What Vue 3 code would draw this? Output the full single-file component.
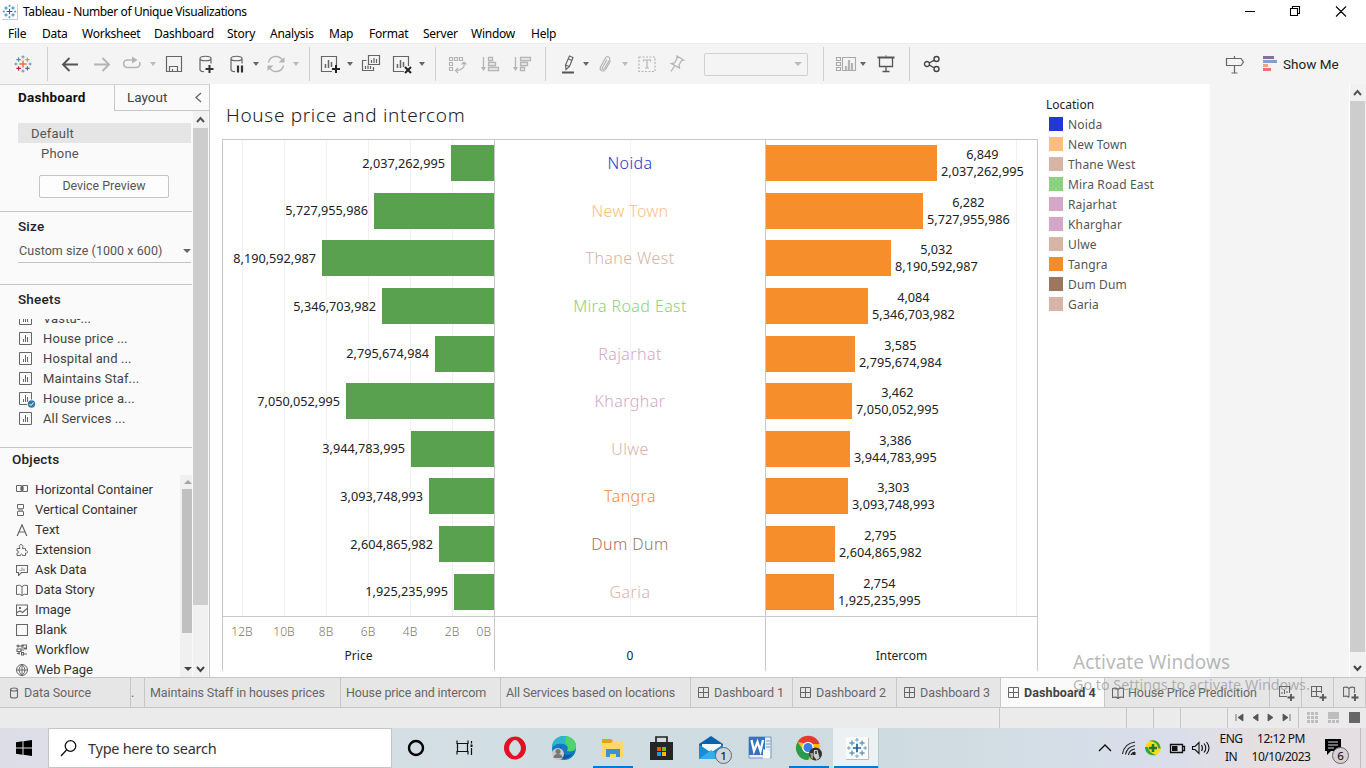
<script setup>
const plus = (x, y, r) => `M${x - r} ${y}h${2 * r}M${x} ${y - r}v${2 * r}`
const p = (d, c = '#666', w = 1.2, extra = '') => `<path d="${d}" fill="none" stroke="${c}" stroke-width="${w}" ${extra}/>`
const f = (d, c = '#666') => `<path d="${d}" fill="${c}"/>`

const cylinder = 'M6 6.5c0-3 11-3 11 0s-11 3-11 0v11q0 2 4 2.2M17 6.5v5'
const tableauMark = (a, b, c, d, e, g) =>
  p(plus(12, 12, 3.6), a, 1.5) +
  p(plus(7.6, 7.6, 2.2), b, 1.2) + p(plus(16.4, 7.6, 2.2), c, 1.2) +
  p(plus(7.6, 16.4, 2.2), d, 1.2) + p(plus(16.4, 16.4, 2.2), e, 1.2) +
  p(plus(12, 4.9, 1.5) + plus(12, 19.1, 1.5) + plus(4.9, 12, 1.5) + plus(19.1, 12, 1.5), g, 1.1)

const icons = {
  logo: tableauMark('#e8762c', '#5b879b', '#eb912c', '#c72037', '#5c6692', '#7199a6'),
  back: p('M20 12.5H5M11.5 6L5 12.5l6.5 6.5', '#555', 1.9),
  forward: p('M4 12.5h15M12.5 6l6.5 6.5-6.5 6.5', '#b4b4b4', 1.9),
  redo: p('M14 8H8a4 3.800 0 0 0 0 7.500h9.500a3.800 3.800 0 0 0 3-5.500', '#b4b4b4', 1.5) + f('M13 4.500l5.500 3.500-5.500 3.500z', '#b4b4b4'),
  save: p('M4.500 4.500h15v15h-15zM7.500 19.500v-5h8v5M10.500 19v-2', '#666', 1.2),
  addData: p(cylinder) + p('M15.500 13v8M11.500 17h8', '#333', 2),
  pauseData: p(cylinder) + p('M13 13.500v7M17 13.500v7', '#333', 2.2),
  refresh: p('M4.500 10.500a7.500 7.500 0 0 1 14-2M19.500 13.500a7.500 7.500 0 0 1-14 2', '#b4b4b4', 1.4) + f('M20.500 5v5.500h-6zM3.500 19v-5.500h6z', '#b4b4b4'),
  newSheet: p('M13 19.500H2.500v-15h15V14') + p('M6.500 12v4M9.500 8v8M12.500 10v5', '#666', 1.5) + p('M17 13v8M13 17h8', '#222', 2),
  duplicate: p('M9.500 3.500h11v9h-11zM7.500 8.500h-4v10h11V15') + p('M12.500 8v3M15 6v5M17.500 7v4M6.500 14v3M9 13.500v3.500M11.500 14v3', '#666', 1.2),
  clearSheet: p('M13 19.500H2.500v-15h15V14') + p('M6.500 12v4M9.500 8v8M12.500 10v5', '#666', 1.5) + p('M14 15l6 6M20 15l-6 6', '#222', 2),
  swap: p('M4.500 5.500h3v3h-3zM9.500 5.500h3v3h-3zM14.500 5.500h3v3h-3zM4.500 10.500h3v3h-3zM4.500 15.500h3v3h-3zM19 11c1 4-2 7.500-8 7.500M16.500 12.500l2.500-2.500 2.500 2.500M13 16l-2.500 2.500L13 21', '#b4b4b4'),
  sortAsc: p('M5.500 5v13M10.500 5.500h4v3h-4zM10.500 10.500h7v3h-7zM10.500 15.500h10v3h-10z', '#b4b4b4', 1.3) + f('M3 15h5l-2.500 4z', '#b4b4b4'),
  sortDesc: p('M5.500 5v13M10.500 5.500h10v3h-10zM10.500 10.500h7v3h-7zM10.500 15.500h4v3h-4z', '#b4b4b4', 1.3) + f('M3 15h5l-2.500 4z', '#b4b4b4'),
  highlight: p('M13.500 4l3.500 1.500-3.500 9-3.500 3-.5-4.500zM9.500 13l4 1.500M12.500 7l3.500 1.500', '#666', 1.2) + p('M6 20.500h12', '#555', 2),
  clip: p('M17.500 9l-5 8.500c-2 3-6.500 1-5-2.500l5-9c1.500-2.500 5.500-1 4 2l-5 8.500c-1 1.500-3 .5-2-1l4.500-8', '#b4b4b4', 1.2),
  textMark: p('M4 5h16v14.500H4z', '#b4b4b4', 1.2, 'stroke-dasharray="2 1.500"') + p('M8.500 9.500V8h7v1.500M12 8v8M10 16h4', '#b4b4b4', 1.2),
  pin: p('M12 4l6.500 4-2 .5-2.500 4.500.5 3-8-4.500 3-.5 2.500-4.500zM9.500 14L6 19.500', '#b4b4b4', 1.3),
  cards: p('M2.500 5.500h4v3h-4zM2.500 10.500h4v3h-4zM2.500 15.500h4v3h-4zM8.500 5.500h13v13h-13z', '#a9a9a9', 1.1) + p('M12 14v4M15 8v10M18 11v7', '#b4b4b4', 2.2),
  present: p('M5.500 5.500v9h13v-9M12 3.500v1M12 14.500v5M8.500 19.500h7', '#555', 1.3) + p('M3.500 5.500h17', '#555', 2),
  share: p('M9.500 12a2.500 2.500 0 1 1-5 0a2.500 2.500 0 1 1 5 0M19 7a2.500 2.500 0 1 1-5 0a2.500 2.500 0 1 1 5 0M19 17a2.500 2.500 0 1 1-5 0a2.500 2.500 0 1 1 5 0M9.300 11l5-3M9.300 13l5 3', '#444', 1.4),
  guide: p('M4.500 6.500h14.500l2.500 3.500-2.500 3.500H4.500zM12.500 4v2.500M12.500 13.500v7.500M9.500 21h6', '#666', 1.2),
}

const toolbar = ['logo', '|', 'back', 'forward', 'redo', 'vl', 'save', 'addData', 'pauseData', 'v', 'refresh', 'vl', '|',
  'newSheet', 'v', 'duplicate', 'clearSheet', 'v', '|', 'swap', 'sortAsc', 'sortDesc', '|', 'highlight', 'v', 'clip', 'vl',
  'textMark', 'pin', 'select', '|', 'cards', 'v', 'present', '|', 'share', 'guide']

const menus = ['File', 'Data', 'Worksheet', 'Dashboard', 'Story', 'Analysis', 'Map', 'Format', 'Server', 'Window', 'Help']
const sheets = ['Vastu-...', 'House price ...', 'Hospital and ...', 'Maintains Staf...', 'House price a...', 'All Services ...']

const objects = [
  ['Horizontal Container', p('M.500 1.500h5v6h-5zM6.500 1.500h5v6h-5z', '#666', 1) + f('M4 2.500h1v4H4zM7 2.500h1v4H7z', '#999')],
  ['Vertical Container', p('M1.500.500h6v4h-6zM1.500 7.500h6v4h-6z', '#666', 1) + f('M2 4.500h5v3H2z', '#aaa')],
  ['Text', p('M1.200 12L6 .800l4.800 11.200M3 8h6', '#666', 1.2)],
  ['Extension', p('M1 4.500h3C2.500 1.500 3.500.600 5 .600s2.500 1 1.500 4h3v2c3-.5 3 3 0 2.500V11.500H6.500c0-2-2-2-2 0H1V9c2.500 0 2.500-2 0-2z', '#666', 1)],
  ['Ask Data', p('M.500 1.500h11v7h-6l-3 3v-3h-2z', '#666', 1.1) + p('M4 5.500V7M6 3.500V7M8 4.500V7', '#aaa', 1.5)],
  ['Data Story', p('M6 2.500Q4 .5.500 1.500v9Q4 9.500 6 11.500Q8 9.500 11.500 10.500v-9Q8 .5 6 2.500v9', '#666', 1)],
  ['Image', p('M.500 1h11v10.500H.500zM1 8.500l3-1.500 2.500 1.500L11 4.500', '#666', 1.1) + f('M3 3h2v2H3z')],
  ['Blank', p('M.500.500h11v11H.500z', '#666', 1.1)],
  ['Workflow', p('M3 2a1 1 0 1 1-2 0a1 1 0 1 1 2 0M3 2h5M6 1h4.500v3H6zM1 5h4v2.500H1zM5 6h3M8 5h3M3 7.500v3M1 9.500h3M5.500 8.500h2v2.500h-2zM8 10h3', '#666', 1.1)],
  ['Web Page', p('M11.500 6A5.500 5.500 0 1 1 .500 6A5.500 5.500 0 1 1 11.500 6M.500 6h11M6 .500v11M6 .500Q0 6 6 11.500Q12 6 6 .500', '#666', 1)],
]

const rows = [
  ['Noida', 2037262995, 6849, '#2337d6'],
  ['New Town', 5727955986, 6282, '#ffbe7d'],
  ['Thane West', 8190592987, 5032, '#d7b5a6'],
  ['Mira Road East', 5346703982, 4084, '#8cd17d'],
  ['Rajarhat', 2795674984, 3585, '#d4a6c8'],
  ['Kharghar', 7050052995, 3462, '#d4a6c8'],
  ['Ulwe', 3944783995, 3386, '#d7b5a6'],
  ['Tangra', 3093748993, 3303, '#f28e2b'],
  ['Dum Dum', 2604865982, 2795, '#9d7660'],
  ['Garia', 1925235995, 2754, '#d7b5a6'],
].map(([name, price, count, color]) => ({ name, price, count, color }))
const fmt = n => n.toLocaleString('en-US')
const ticks = ['12B', '10B', '8B', '6B', '4B', '2B', '0B']

const grid4 = p('M.500.500h10v10H.500zM5.500.500v10M.500 5.500h10', '#666', 1)
const book = p('M6 2.500Q4 .5.500 1.500v9Q4 9.500 6 11.500Q8 9.500 11.500 10.500v-9Q8 .5 6 2.500v9', '#666', 1.1)
const addBadge = p('M12 8v7M8.500 11.500h7', '#555', 1.8)
const tabs = [
  { t: 'Data Source', i: p('M.500 2.500c0-2 7-2 7 0s-7 2-7 0v7c0 2 7 2 7 0v-7', '#666', 1.1), k: 'source' },
  { t: '.', k: 'cut' },
  { t: 'Maintains Staff in houses prices' },
  { t: 'House price and intercom' },
  { t: 'All Services based on locations' },
  { t: 'Dashboard 1', i: grid4 }, { t: 'Dashboard 2', i: grid4 }, { t: 'Dashboard 3', i: grid4 },
  { t: 'Dashboard 4', i: grid4, k: 'active' },
  { t: 'House Price Predicition', i: book },
  { i: p('M8 10.500H.500v-10h10V7M3 6v2M5.500 4v4M8 5v2', '#666', 1.1) + addBadge, k: 'add' },
  { i: p('M8 10.500H.500v-10h10V7M5.500.500v10M.500 5.500h10', '#666', 1.1) + addBadge, k: 'add' },
  { i: p('M6 2.500Q4 .5.500 1.500v9Q4 9.500 6 11.500M6 11V2.500Q8 .5 11.500 1.500V7', '#666', 1.1) + addBadge, k: 'add' },
]

const apps = [
  { n: 'cortana', s: p('M22 16a7 7 0 1 1-14 0a7 7 0 1 1 14 0', '#000', 2.4) },
  { n: 'tasks', s: p('M7 8.500v3h11v-3M7 22.500v-3h11v3M7.500 11.500v8M17.500 11.500v8M21.500 9v2.500M21.500 16v7', '#111', 1.2) + f('M20.500 12.500h2v2.500h-2z', '#111') },
  { n: 'opera', s: '<ellipse cx="16" cy="16" rx="8.500" ry="9" fill="none" stroke="#e30f22" stroke-width="5"/><ellipse cx="16" cy="16" rx="4.800" ry="8" fill="#d0dde2"/>' },
  { n: 'edge', s: '<circle cx="16" cy="16" r="12" fill="#1479c4"/><path d="M4 14C6 1 25 1 28 13c.5 6-5 7-9 6 2-3 0-6-4-7-4-.8-9 0-11 4z" fill="#2eb7cc"/><path d="M18 4c7 1 10 6 10 10 0 5-5 6-9 5 2-3 1-6-2-8z" fill="#4fd36b"/><path d="M17 12c-5 1-5 6-2 9 4 4 8 2 10 0-3 5-8 7-13 5-3-4-2-12 5-14z" fill="#0c559f"/><circle cx="10" cy="22" r="6" fill="#c9c9c9"/><circle cx="10" cy="19.500" r="2.500" fill="#777"/><path d="M5.500 26q0-4 4.500-4t4.500 4z" fill="#777"/>' },
  { n: 'explorer', u: 1, s: '<path d="M5 7h9l2 2h10v5H5z" fill="#e3a21a"/><path d="M5 11l9 0 2-2h10v16H5z" fill="#ffd866"/><path d="M9 25V17h14v8h-4v-3h-6v3z" fill="#3a91d5"/>' },
  { n: 'store', s: '<path d="M10 10V5h11v5" fill="none" stroke="#222" stroke-width="1.700"/><path d="M4 10h23v18H4z" fill="#252525"/><path d="M11 15h4v4h-4z" fill="#f25022"/><path d="M16 15h4v4h-4z" fill="#7fba00"/><path d="M11 20h4v4h-4z" fill="#00a4ef"/><path d="M16 20h4v4h-4z" fill="#ffb900"/>' },
  { n: 'mail', b: '1', s: '<path d="M4 12L16 4l12 8v15H4z" fill="#0862af"/><path d="M7 12h19v9H7z" fill="#f4f8fb"/><path d="M4 12.500l12 8 12-8V27H4z" fill="#138ddb"/><path d="M4 27l12-9 12 9z" fill="#35aced"/>' },
  { n: 'word', s: '<path d="M5 5h22v21H5z" fill="#e9f0f8" stroke="#7297c2"/><path d="M5 5h16v18H5z" fill="#3a71bd"/><path d="M7.500 8l2.500 11L13.500 10l3 9 2.500-11" fill="none" stroke="#fff" stroke-width="2.300"/><path d="M22 9h4M22 12h4M22 15h4" stroke="#7b9ac4"/><path d="M19 17l7 2.500v7h-7z" fill="#fff"/>' },
  { n: 'chrome', u: 1, s: '<circle cx="15" cy="16" r="12" fill="#fbbf12"/><path d="M4.600 10A12 12 0 0 1 26.500 12H15z" fill="#e53a2e"/><path d="M4.600 10A12 12 0 0 0 15 28l4-8-8-1z" fill="#279c51"/><circle cx="15" cy="15.500" r="5.800" fill="#fff"/><circle cx="15" cy="15.500" r="4.500" fill="#3b7de9"/><circle cx="22.500" cy="22" r="6.500" fill="#333"/><path d="M21 18h3.500l2 8-3 2-3-4z" fill="#ccc"/><path d="M17 21h3v6l-2-1z" fill="#999"/><path d="M22 19h2v3h-2z" fill="#555"/>' },
  { n: 'tableau', u: 1, s: '<path d="M6 5h22v22H6z" fill="#fbfbfb"/><path d="M6 27.500h22.500V6" fill="none" stroke="#bbb"/><g transform="translate(3.200 2.200) scale(1.150)">' + tableauMark('#1f639a', '#6c9ab8', '#6c9ab8', '#6c9ab8', '#6c9ab8', '#86adc6') + '</g>' },
]

const tray = [
  p('M6 15l6-6 6 6', '#111', 1.4),
  p('M5.500 18C6.500 11 11 7 18 6M8.500 18.500C9.500 13 12 10.500 18 9.500M11.500 19c.5-3.500 3-5.500 6.500-6M14 19c.5-1.500 2-2.500 4-3', '#222', 1.2) + f('M15.500 16h3v3h-3z', '#222'),
  '<circle cx="12" cy="12" r="7.700" fill="#ffd91c"/><path d="M8 5c7-3 12 3 11.500 8l-2.500-1C17 8 13 5 8 5M4 11c0 6 5 9 11 8-3-1-7-3-8-8z" fill="#38a148"/><path d="M12 8v8M8 12h8" stroke="#187a32" stroke-width="2.600"/>',
  p('M5.500 8.500h12v8h-12zM17.500 10.500h2v4h-2', '#111', 1.3) + f('M7 10h5.500v5H7z', '#111'),
  p('M3.500 10.500h2.500l4-4v11l-4-4H3.500zM12.500 9q2 3 0 6M15 7.500q3.500 4.500 0 9M17.500 6q5 6 0 12', '#111', 1.1),
]
const pager = ['M1 1v7M8 1v7L3 4.500z', 'M7 1v7L2 4.500z', 'M2 1v7l5-3.500z', 'M1 1v7l5-3.500zM8 1v7']
</script>

<template>
  <div class="app">
    <header class="titlebar">
      <svg class="mark" viewBox="2.500 2.500 19 19" v-html="tableauMark('#1f639a', '#2f88b5', '#2f88b5', '#2f88b5', '#2f88b5', '#4e9cc0')"></svg>
      <span class="caption">Tableau - Number of Unique Visualizations</span>
      <svg class="win" width="116" height="20">
        <path d="M1 10.500h10M46.500 7.500h7v7h-7zM48.500 7.500v-2h7v7h-2M92 5.500l10 10M102 5.500l-10 10" fill="none" stroke="#000" stroke-width="1.100" />
      </svg>
    </header>
    <nav class="menubar"><span v-for="m in menus" :key="m">{{ m }}</span></nav>

    <div class="toolbar">
      <span v-for="(t, i) in toolbar" :key="i" class="tool">
        <i v-if="t === '|'" class="sep"></i>
        <i v-else-if="t[0] === 'v'" class="caret" :class="{ light: t === 'vl' }"></i>
        <span v-else-if="t === 'select'" class="select"><i class="caret light"></i></span>
        <svg v-else width="24" height="24" v-html="icons[t]"></svg>
      </span>
      <span class="tool showme">
        <svg width="15" height="16"><path d="M0 0h11v3H0z" fill="#86709a" /><path d="M0 4h14v3H0z" fill="#7ba3cd" /><path d="M0 8h5v3H0z" fill="#f2a57e" /><path d="M0 12h8v3H0z" fill="#f36d7a" /></svg>
        <b>Show Me</b>
      </span>
    </div>

    <main class="work">
      <aside class="side">
        <div class="sidetabs">
          <span class="on">Dashboard</span>
          <span class="off">Layout<svg width="8" height="12"><path d="M7 1L2 5.500l5 4.500" fill="none" stroke="#666" stroke-width="1.300" /></svg></span>
        </div>
        <div class="sidebody">
          <div class="sections">
            <section class="devices">
              <div class="device sel">Default</div>
              <div class="device phone">Phone</div>
              <button class="preview">Device Preview</button>
            </section>
            <section class="size">
              <h3>Size</h3>
              <div class="sizesel"><span>Custom size (1000 x 600)</span><i class="caret"></i></div>
            </section>
            <section class="sheets">
              <h3>Sheets</h3>
              <ul>
                <li v-for="(s, i) in sheets" :key="s">
                  <svg width="18" height="17">
                    <path d="M.500 1.500h12v12H.500z" fill="none" stroke="#666" />
                    <path d="M4.500 8v3M6.500 4v7M8.500 6v5" stroke="#666" />
                    <g v-if="i === 4"><circle cx="12.500" cy="13" r="4.500" fill="#fafafa" /><circle cx="12.500" cy="13" r="3.700" fill="#327ba3" /><path d="M10.500 13l1.500 1.500 2.500-3" fill="none" stroke="#fff" /></g>
                  </svg>{{ s }}
                </li>
              </ul>
            </section>
            <section class="objects">
              <h3>Objects</h3>
              <div class="objrow">
                <ul>
                  <li v-for="o in objects" :key="o[0]"><svg width="12" height="12" v-html="o[1]"></svg>{{ o[0] }}</li>
                </ul>
                <div class="innerbar">
                  <svg width="12" height="14"><path d="M4 9l4-4 4 4z" fill="#a3a3a3" /></svg>
                  <i></i>
                  <svg width="12" height="14"><path d="M4 5l4 4 4-4z" fill="#444" /></svg>
                </div>
              </div>
            </section>
          </div>
          <div class="scroll sidescroll">
            <svg width="15" height="17"><path d="M4 11l3.500-4L11 11" fill="none" stroke="#555" stroke-width="2" /></svg>
            <i></i>
            <svg width="15" height="17"><path d="M4 7l3.500 4L11 7" fill="none" stroke="#444" stroke-width="2" /></svg>
          </div>
        </div>
      </aside>

      <div class="page">
        <div class="viz">
          <h1>House price and intercom</h1>
          <div class="chart">
            <div class="pane price">
              <div v-for="r in rows" :key="r.name" class="row">
                <span class="num">{{ fmt(r.price) }}</span>
                <i class="bar" :style="{ width: Math.round(r.price / 1e9 * 21) + 'px' }"></i>
              </div>
            </div>
            <div class="pane names">
              <div v-for="r in rows" :key="r.name" class="row" :style="{ color: r.color }">{{ r.name }}</div>
            </div>
            <div class="pane count">
              <div v-for="r in rows" :key="r.name" class="row">
                <i class="bar" :style="{ width: Math.floor(r.count * 0.025) + 'px' }"></i>
                <span class="num">{{ fmt(r.count) }}<br>{{ fmt(r.price) }}</span>
              </div>
            </div>
            <div class="axis"><div class="ticks"><span v-for="t in ticks" :key="t">{{ t }}</span></div><em>Price</em></div>
            <div class="axis"><em>0</em></div>
            <div class="axis"><em>Intercom</em></div>
          </div>
        </div>
        <div class="legend">
          <h4>Location</h4>
          <div v-for="r in rows" :key="r.name"><i :style="{ background: r.color }"></i>{{ r.name }}</div>
        </div>
      </div>
      <div class="void"></div>
      <div class="scroll mainscroll">
        <svg width="15" height="17"><path d="M4 11l3.500-4L11 11" fill="none" stroke="#555" stroke-width="2" /></svg>
        <i></i>
        <svg width="15" height="17"><path d="M4 6l3.500 4L11 6" fill="none" stroke="#444" stroke-width="2" /></svg>
      </div>
    </main>

    <div class="tabs">
      <span v-for="(t, i) in tabs" :key="i" class="tab" :class="t.k">
        <svg v-if="t.i" :width="t.k === 'add' ? 16 : 12" :height="t.k === 'add' ? 15 : 12" v-html="t.i"></svg><span v-if="t.t">{{ t.t }}</span>
      </span>
    </div>
    <div class="status">
      <span></span><span></span><span></span><span></span><span></span>
      <span class="pager"><svg v-for="d in pager" :key="d" width="9" height="9"><path :d="d" fill="#555" stroke="#555" stroke-width=".8" /></svg></span>
      <span class="modes">
        <svg width="54" height="12">
          <path d="M0 0h3v3H0zM4 0h3v3H4zM8 0h3v3H8zM0 4h3v3H0zM4 4h3v3H4zM8 4h3v3H8zM0 8h3v3H0zM4 8h3v3H4zM8 8h3v3H8zM21 0h11v7H21zM21 8h3v3h-3zM25 8h3v3h-3zM29 8h3v3h-3z" fill="#bdbdbd" />
          <path d="M42 0h11v11H42z" fill="#666" />
        </svg>
      </span>
    </div>

    <footer class="taskbar">
      <span class="start"><svg width="16" height="16"><path d="M0 2.200L6.500 1.300v6.200H0zM7.500 1.200L16 0v7.500H7.500zM0 8.500h6.500v6.200L0 13.800zM7.500 8.500H16V16l-8.500-1.200z" fill="#000" /></svg></span>
      <span class="search"><svg width="17" height="17"><circle cx="10.500" cy="6" r="5.300" fill="none" stroke="#111" stroke-width="1.300" /><path d="M6.500 10L1 16" stroke="#111" stroke-width="1.300" /></svg>Type here to search</span>
      <span v-for="a in apps" :key="a.n" class="appicon" :class="[a.n, { used: a.u }]">
        <svg width="32" height="32" v-html="a.s"></svg><b v-if="a.b" class="badge">{{ a.b }}</b>
      </span>
      <span class="tray">
        <svg v-for="t in tray" :key="t" width="24" height="24" v-html="t"></svg>
        <span class="two">ENG<br>IN</span>
        <span class="two">12:12 PM<br>10/10/2023</span>
        <span class="note"><svg width="20" height="20"><path d="M2 2h16v12H8l-4 4v-4H2z" fill="#000" /><path d="M5 5h10M5 8h10M5 11h6" stroke="#dedde2" /></svg><b class="badge">6</b></span>
      </span>
    </footer>

    <div class="watermark"><p>Activate Windows</p><p>Go to Settings to activate Windows.</p></div>
  </div>
</template>

<style>
body { margin: 0; overflow: hidden; }
</style>
<style scoped>
* { box-sizing: border-box; }
.app { position: relative; width: 1366px; height: 768px; display: flex; flex-direction: column; overflow: hidden; background: #fff; font-family: "Noto Sans", "Liberation Sans", sans-serif; font-size: 12px; color: #333; }
svg { display: block; flex: none; }
i { font-style: normal; display: block; }
h1, h3, h4, p, ul { margin: 0; padding: 0; font-weight: 400; list-style: none; }
.titlebar { flex: none; height: 23px; display: flex; align-items: center; color: #000; }
.mark { width: 16px; height: 16px; margin-left: 2px; border-right: 1px solid #ccc; border-bottom: 1px solid #ccc; }
.caption { margin-left: 5px; font-size: 12px; letter-spacing: -.375px; white-space: nowrap; }
.win { margin: 0 6px 2px auto; }
.menubar { flex: none; height: 20px; padding-left: 8px; display: grid; grid-template-columns: 34px 40px 72px 73px 43px 59px 40px 54px 48px 60px 40px; line-height: 21px; color: #000; letter-spacing: -.25px; }
.toolbar { flex: none; height: 41px; background: #f4f4f4; display: grid; align-items: center; border-top: 1px solid #ededed;
  grid-template-columns: 35px 13px 34px 32px 29px 14px 29px 32px 31px 11px 28px 12px 10px 33px 11px 29px 32px 11px 10px 33px 33px 32px 12px 34px 10px 27px 12px 30px 30px 119px 16px 34px 9px 31px 12px 34px 302px 92px; }
.tool { display: flex; justify-content: flex-end; align-items: center; }
.sep { width: 1px; height: 34px; background: #cfcfcf; }
.caret { width: 0; height: 0; margin: 0 1px 0 0; border: 3px solid transparent; border-top: 4px solid #666; border-bottom: 0; }
.light { border-top-color: #bbb; }
.select { width: 104px; height: 23px; border: 1px solid #d0d0d0; border-radius: 2px; display: flex; align-items: center; justify-content: flex-end; padding-right: 4px; }
.select .caret { border-width: 4px 4px 0; }
.showme { gap: 5px; }
.showme b { font: 400 13.500px Roboto, sans-serif; width: 55px; color: #222; white-space: nowrap; }

.work { flex: none; height: 593px; display: grid; grid-template-columns: 210px 1000px 139px 17px; }
.side { background: #fafafa; border-right: 1px solid #c8c8c8; border-top: 1px solid #d4d4d4; font-family: Roboto, sans-serif; font-size: 13px; overflow: hidden; }
.sidetabs { height: 26px; display: grid; grid-template-columns: 114px 95px; font-size: 13.500px; line-height: 25px; }
.on { padding-left: 18px; font-weight: 700; color: #111; letter-spacing: .25px; }
.off { border: 1px solid #c8c8c8; border-width: 0 0 1px 1px; padding: 0 7px 0 12px; display: flex; align-items: center; justify-content: space-between; color: #444; }
.sidebody { display: grid; grid-template-columns: 193px 15px; height: 566px; }
section { width: 192px; border-bottom: 1px solid #c4c4c4; }
h3 { font: 500 13.500px Roboto, sans-serif; color: #222; padding-left: 18px; letter-spacing: .2px; }
.devices { height: 101px; padding: 12px 1px 0 18px; }
.device { height: 20px; line-height: 21px; padding-left: 13px; color: #555; letter-spacing: .2px; }
.sel { background: #e5e5e5; }
.phone { padding-left: 23px; }
.preview { display: block; width: 130px; height: 23px; margin: 12px 0 0 21px; background: #fdfdfd; border: 1px solid #c4c4c4; border-radius: 2px; font: 12.400px Roboto, sans-serif; color: #555; padding: 0 0 2px; }
.size { height: 73px; padding-top: 6px; }
.sizesel { margin: 5px 1px 0 18px; height: 24px; border-bottom: 1px solid #c4c4c4; display: flex; align-items: center; justify-content: space-between; padding-left: 1px; font-size: 12.500px; letter-spacing: .05px; color: #555; }
.sizesel .caret { border-width: 4px 4px 0; margin: 0; }
.sheets { height: 163px; padding-top: 6px; }
.sheets ul { margin-top: 12px; height: 110px; overflow: hidden; display: flex; flex-direction: column; justify-content: flex-end; letter-spacing: .12px; }
.sheets li { flex: none; height: 20px; display: flex; align-items: center; gap: 6px; padding-left: 19px; color: #444; line-height: 20px; }
.objects { border: 0; height: 229px; padding-top: 3px; }
.objects h3 { padding-left: 12px; }
.objrow { display: grid; grid-template-columns: 180px 12px; margin-top: 8px; height: 202px; }
.objects ul { padding-top: 5px; letter-spacing: -.05px; }
.objects li { height: 20px; line-height: 20px; display: flex; align-items: center; gap: 7px; padding-left: 16px; color: #333; white-space: nowrap; }
.innerbar { background: #f0f0f0; }
.innerbar i { height: 144px; background: #c0c0c0; margin: 0 0 0 2px; }
.innerbar svg:last-child { margin-top: 29px; }
.scroll { background: #f1f1f1; display: flex; flex-direction: column; }
.scroll svg:last-child { margin-top: auto; }
.scroll i { background: #cdcdcd; width: 15px; }
.sidescroll i { height: 477px; }
.mainscroll { border-left: 1px solid #fff; }
.mainscroll i { height: 551px; }
.void { background: #f4f4f4; }

.page { background: #fff; display: flex; }
.viz { width: 828px; padding: 17px 0 0 12px; }
h1 { height: 38px; padding-left: 4px; font-size: 19px; font-weight: 300; line-height: 28px; color: #222; white-space: nowrap; letter-spacing: .67px; }
.chart { display: grid; grid-template-columns: 273px 271px 272px; grid-template-rows: 478px 54px; width: 816px; }
.pane { border: 1px solid #c8c8c8; border-left: 0; display: grid; grid-template-rows: repeat(10, 1fr); }
.price { border-left: 1px solid #c8c8c8; background: repeating-linear-gradient(to right, transparent 0 41px, #f0f0f0 41px 42px) -22px 0 / 274px 100% no-repeat; }
.names { background: linear-gradient(#f3f3f3, #f3f3f3) 135px 0 / 1px 100% no-repeat; font-size: 16px; font-weight: 300; letter-spacing: .4px; }
.count { background: linear-gradient(#f0f0f0, #f0f0f0) 250px 0 / 1px 100% no-repeat; }
.row { display: flex; align-items: center; padding-bottom: 1px; }
.price .row { justify-content: flex-end; }
.names .row { justify-content: center; }
.bar { height: 36px; background: #59a14f; }
.price .num { margin-right: 6px; }
.num { font-size: 12.700px; line-height: 17px; color: #222; }
.count .bar { background: #f58e2b; }
.count .num { margin-left: 4px; text-align: center; }
.axis { border-right: 1px solid #c8c8c8; display: flex; flex-direction: column; justify-content: flex-end; align-items: center; }
.axis:nth-child(4) { border-left: 1px solid #c8c8c8; }
.axis em { font-style: normal; font-size: 12px; line-height: 16px; margin-bottom: 7px; color: #222; }
.ticks { display: grid; grid-template-columns: repeat(6, 42px) 18px; width: 271px; margin-left: -4px; text-align: center; color: #7d766c; margin-bottom: 8px; line-height: 16px; font-weight: 300; }
.ticks span:last-child { text-align: right; }
.legend { padding: 12px 0 0 8px; color: #555; letter-spacing: .15px; }
.legend h4 { color: #222; line-height: 18px; height: 18px; letter-spacing: 0; font-size: 12px; }
.legend div { display: flex; align-items: center; height: 20px; gap: 5px; padding-left: 3px; }
.legend i { width: 14px; height: 14px; }

.tabs { flex: none; height: 31px; background: #e6e6e6; border: 1px solid #c6c6c6; border-width: 1px 0; display: grid; grid-template-columns: 131px 14px 196px 160px 190px 102px 104px 104px 104px 165px 32px 32px 32px; font: 12.500px Roboto, sans-serif; letter-spacing: -.12px; color: #666; }
.tab { border-right: 1px solid #c6c6c6; display: flex; align-items: center; gap: 4px; padding-left: 5px; white-space: nowrap; overflow: hidden; }
.tab svg { margin-left: 2px; }
.tab svg + span { letter-spacing: -.05px; }
.source { padding-left: 8px; gap: 2px; }
.cut { padding-left: 0; }
.active { background: #fafafa; font-weight: 700; color: #444; }
.tab.active svg + span { letter-spacing: .1px; }
.add svg { margin-left: 4px; margin-top: 2px; }
.status { flex: none; height: 20px; background: #ebebeb; display: grid; grid-template-columns: 1000px 127px 27px 27px 47px 71px 67px; }
.status > span { border-right: 1px solid #c6c6c6; display: flex; align-items: center; padding-bottom: 1px; }
.status .pager { justify-content: space-between; padding: 0 7px 1px 7px; }
.status .modes { border: 0; padding-left: 8px; }

.taskbar { flex: none; height: 40px; display: grid; grid-template-columns: 48px 344px repeat(10, 49px) 1fr; background: linear-gradient(90deg, #dddde8 0, #d4dfe5 400px, #cfdde2 550px, #cedbe0 900px, #d5dee8 1080px, #dadeea 1180px, #e5dfe0 1260px, #e5dfe4 1366px); color: #111; }
.start { display: flex; align-items: center; justify-content: center; }
.search { background: #fff; border: 1px solid #c5c5c5; display: flex; align-items: center; gap: 11px; padding-left: 11px; font-size: 14.500px; color: #333; letter-spacing: -.27px; }
.appicon { position: relative; display: flex; align-items: center; justify-content: center; }
.used::after { content: ''; position: absolute; left: 5px; right: 4px; bottom: 0; height: 2px; background: #0b78d0; }
.tableau { background: #ecf2f4; margin-right: 3px; border-right: 1px solid #b9c8cf; }
.tableau::after { left: 1px; right: 0; }
.badge { position: absolute; left: 29px; top: 19px; width: 17px; height: 17px; border: 1px solid #666; border-radius: 50%; background: #cfd6db; font-size: 11.500px; font-weight: 500; line-height: 15px; text-align: center; color: #222; }
.tray { display: grid; grid-template-columns: repeat(5, 24px) 36px 64px 48px; align-items: center; justify-content: end; padding-right: 5px; }
.two { text-align: center; font-size: 12px; line-height: 18px; letter-spacing: -.5px; white-space: nowrap; }
.note { position: relative; height: 40px; padding: 9px 0 0 10px; border-right: 1px solid #c2bcc4; }
.note .badge { left: 19px; top: 19px; background: #d5d1d6; }
.watermark { position: absolute; left: 1073px; top: 650px; color: rgba(125, 125, 125, .55); white-space: nowrap; }
.watermark p { font-size: 19px; line-height: 24px; }
.watermark p + p { font-size: 14.300px; line-height: 22px; }
</style>
